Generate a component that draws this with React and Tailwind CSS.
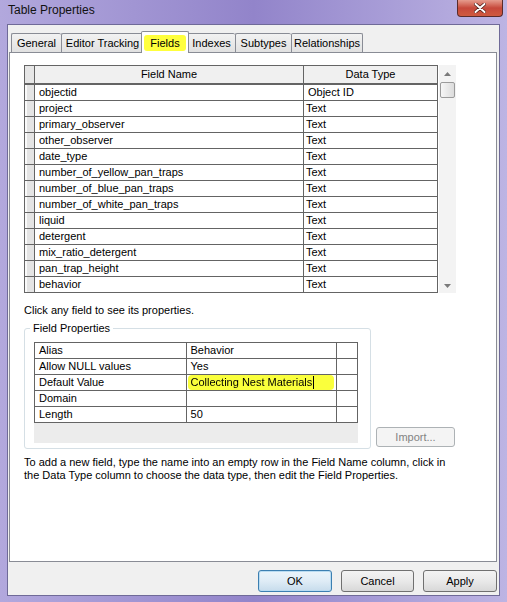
import React from 'react';

const fields = [
  ['objectid', 'Object ID'],
  ['project', 'Text'],
  ['primary_observer', 'Text'],
  ['other_observer', 'Text'],
  ['date_type', 'Text'],
  ['number_of_yellow_pan_traps', 'Text'],
  ['number_of_blue_pan_traps', 'Text'],
  ['number_of_white_pan_traps', 'Text'],
  ['liquid', 'Text'],
  ['detergent', 'Text'],
  ['mix_ratio_detergent', 'Text'],
  ['pan_trap_height', 'Text'],
  ['behavior', 'Text'],
];

const props = [
  ['Alias', 'Behavior'],
  ['Allow NULL values', 'Yes'],
  ['Default Value', 'Collecting Nest Materials'],
  ['Domain', ''],
  ['Length', '50'],
];

// tab label + width in px
const tabs = [
  ['General', 'w-[50px]'],
  ['Editor Tracking', 'w-[82px]'],
  ['Fields', 'w-[48px]'],
  ['Indexes', 'w-[48px]'],
  ['Subtypes', 'w-[56px]'],
  ['Relationships', 'w-[72px]'],
];

const ui = { fontFamily: '"Liberation Sans", Arial, sans-serif' };

function Tab({ label, width }) {
  if (label === 'Fields') {
    return (
      <div className={`relative z-10 -mx-[2px] -mb-[1px] h-[22px] px-[2px] pt-[3px] border border-b-0 border-[#898c95] rounded-t-[2px] bg-white ${width}`}>
        <div className="h-[16px] bg-[#ffff3c] rounded-[3px] text-[11px] leading-[16px] text-center text-black">{label}</div>
      </div>
    );
  }
  return (
    <div className={`h-[19px] border border-b-0 border-r-0 last:border-r border-[#898c95] rounded-t-[2px] bg-gradient-to-b from-[#f2f2f2] to-[#e1e1e1] text-[11px] leading-[18px] text-center text-black ${width}`}>
      {label}
    </div>
  );
}

function Button({ children, primary, disabled }) {
  let cls = 'border-[#707070] text-black bg-gradient-to-b from-[#f3f3f3] via-[#e9e9e9] to-[#d8d8d8]';
  if (primary) cls = 'border-[#3c7fb1] text-black bg-gradient-to-b from-[#eaf4fb] via-[#dfecf6] to-[#c7dcec] shadow-[inset_0_0_0_1px_#b9dcf2]';
  if (disabled) cls = 'border-[#adb2b5] text-[#838383] bg-[#f4f4f4]';
  return (
    <div className={`flex items-center justify-center rounded-[3px] border text-[11px] ${cls}`}>{children}</div>
  );
}

export default function App() {
  return (
    <div className="w-[507px] h-[602px] flex flex-col overflow-hidden bg-gradient-to-r from-[#b2a8dd] via-[#9284ca] to-[#bdb4e3]" style={ui}>
      {/* title bar */}
      <div className="h-[24px] flex items-start justify-between">
        <div className="pl-[8px] pt-[3px] text-[12px] leading-[15px] text-[#111]">Table Properties</div>
        <div className="mr-[4px] w-[46px] h-[17px] flex items-center justify-center rounded-b-[4px] border border-t-0 border-[#5a2b2b] bg-gradient-to-b from-[#e59c8e] via-[#c6483b] to-[#cf5a3f]">
          <svg width="12" height="10" viewBox="0 0 12 10">
            <path d="M1.5 1 L10.5 9 M10.5 1 L1.5 9" stroke="#4a1a14" strokeWidth="3.4" strokeLinecap="round" />
            <path d="M1.5 1 L10.5 9 M10.5 1 L1.5 9" stroke="#fff" strokeWidth="2" strokeLinecap="round" />
          </svg>
        </div>
      </div>

      {/* dialog body */}
      <div className="mx-[7px] mb-[6px] flex-1 flex flex-col bg-[#f0f0f0] border border-[#6f6a98]">
        <div className="pt-[6px] pl-[3px] flex items-end">
          {tabs.map(([t, w]) => (
            <Tab key={t} label={t} width={w} />
          ))}
        </div>

        <div className="ml-[1px] w-[488px] h-[510px] bg-white border border-[#898c95] pl-[14px] pt-[12px]">
          {/* fields grid */}
          <div className="flex">
            <div className="border-l border-t border-[#646464] text-[11px] text-black">
              <div className="flex h-[19px] border-b-2 border-[#646464] bg-[#f0f0f0]">
                <div className="w-[10px] border-r border-[#646464] bg-[#e6e6e6]" />
                <div className="w-[269px] border-r border-[#646464] text-center leading-[17px]">Field Name</div>
                <div className="w-[134px] border-r border-[#646464] text-center leading-[17px]">Data Type</div>
              </div>
              {fields.map(([name, type]) => (
                <div key={name} className="flex h-[16px] border-b border-[#646464]">
                  <div className="w-[10px] border-r border-[#646464] bg-[#e4e4e4] shadow-[inset_2px_0_0_#fafafa]" />
                  <div className="w-[269px] border-r border-[#646464] pl-[4px] leading-[15px]">{name}</div>
                  <div className={`w-[134px] border-r border-[#646464] leading-[15px] ${type === 'Object ID' ? 'pl-[4px]' : 'pl-[2px]'}`}>{type}</div>
                </div>
              ))}
            </div>
            {/* vertical scrollbar */}
            <div className="ml-[1px] w-[17px] h-[228px] flex flex-col bg-[#f3f3f3]">
              <div className="h-[17px] flex items-center justify-center">
                <svg width="7" height="4" viewBox="0 0 7 4"><path d="M0 4 L3.5 0 L7 4 Z" fill="#7a7a7a" /></svg>
              </div>
              <div className="mx-[1px] h-[16px] rounded-[2px] border border-[#9b9b9b] bg-gradient-to-r from-[#f6f6f6] to-[#dcdcdc]" />
              <div className="flex-1" />
              <div className="h-[15px] flex items-center justify-center">
                <svg width="7" height="4" viewBox="0 0 7 4"><path d="M0 0 L3.5 4 L7 0 Z" fill="#7a7a7a" /></svg>
              </div>
            </div>
          </div>

          <div className="mt-[9px] text-[11px] leading-[16px] text-black">Click any field to see its properties.</div>

          <div className="mt-[2px] flex items-end">
            <fieldset className="w-[347px] border border-[#d5dfe5] rounded-[3px] pl-[9px] pb-[5px]">
              <legend className="-ml-[4px] px-[3px] text-[11px] leading-[16px] text-black">Field Properties</legend>
              <div className="mt-[6px] w-[324px] border-l border-t border-[#646464] text-[11px] text-black">
                {props.map(([k, v]) => (
                  <div key={k} className="flex h-[16px] border-b border-[#646464]">
                    <div className="w-[152px] border-r border-[#646464] pl-[4px] leading-[15px]">{k}</div>
                    <div className="w-[151px] border-r border-[#646464] pl-[1px] leading-[15px]">
                      {k === 'Default Value' ? (
                        <span className="inline-flex h-[15px] w-[146px] pl-[3px] items-center bg-[#faff3c] rounded-[4px] blur-[0.3px]">
                          {v}
                          <span className="ml-[1px] w-[1px] h-[13px] bg-black" />
                        </span>
                      ) : (
                        <span className="pl-[3px]">{v}</span>
                      )}
                    </div>
                    <div className="w-[21px] border-r border-[#646464]" />
                  </div>
                ))}
              </div>
              <div className="w-[324px] h-[20px] bg-[#ececec]" />
            </fieldset>
            <div className="ml-[5px] mb-[2px] w-[79px] h-[20px] grid">
              <Button disabled>Import...</Button>
            </div>
          </div>

          <p className="mt-[7px] text-[11px] leading-[13px] text-black whitespace-nowrap">
            To add a new field, type the name into an empty row in the Field Name column, click in
            <br />
            the Data Type column to choose the data type, then edit the Field Properties.
          </p>
        </div>

        {/* dialog buttons */}
        <div className="mt-[8px] pr-[2px] flex justify-end gap-[9px]">
          <div className="w-[74px] h-[22px] grid"><Button primary>OK</Button></div>
          <div className="w-[73px] h-[22px] grid"><Button>Cancel</Button></div>
          <div className="w-[74px] h-[22px] grid"><Button>Apply</Button></div>
        </div>
      </div>
    </div>
  );
}
